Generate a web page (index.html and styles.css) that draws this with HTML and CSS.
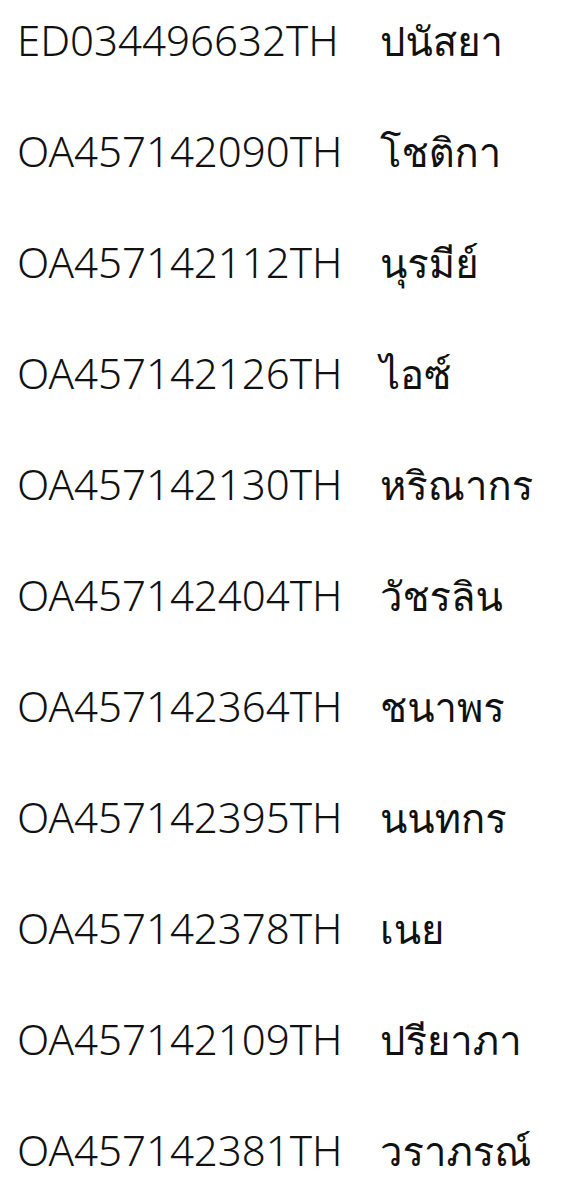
FILE: index.html
```html
<!DOCTYPE html>
<html lang="th">
<head>
  <meta charset="UTF-8" />
  <meta name="viewport" content="width=device-width, initial-scale=1.0" />
  <title>รายการพัสดุ</title>
  <link rel="stylesheet" href="styles.css">
</head>
<body>
  <ul class="list">
    <li class="row"><span class="code">ED034496632TH</span><span class="name">ปนัสยา</span></li>
    <li class="row"><span class="code">OA457142090TH</span><span class="name">โชติกา</span></li>
    <li class="row"><span class="code">OA457142112TH</span><span class="name">นุรมีย์</span></li>
    <li class="row"><span class="code">OA457142126TH</span><span class="name">ไอซ์</span></li>
    <li class="row"><span class="code">OA457142130TH</span><span class="name">หริณากร</span></li>
    <li class="row"><span class="code">OA457142404TH</span><span class="name">วัชรลิน</span></li>
    <li class="row"><span class="code">OA457142364TH</span><span class="name">ชนาพร</span></li>
    <li class="row"><span class="code">OA457142395TH</span><span class="name">นนทกร</span></li>
    <li class="row"><span class="code">OA457142378TH</span><span class="name">เนย</span></li>
    <li class="row"><span class="code">OA457142109TH</span><span class="name">ปรียาภา</span></li>
    <li class="row"><span class="code">OA457142381TH</span><span class="name">วราภรณ์</span></li>
  </ul>
</body>
</html>
```

FILE: styles.css
```css
body {
  margin: 0;
  background: #fff;
  color: #111;
  font-family: 'Noto Sans', 'DejaVu Sans', sans-serif;
}

.list {
  list-style: none;
  margin: 0;
  padding: 0 0 0 17px;
}

.row {
  display: flex;
  align-items: baseline;
  height: 111px;
  line-height: 80px;
  font-size: 42px;
  font-weight: 300;
}

.code {
  width: 363px;
  flex: none;
}

.name {
  font-family: 'Loma', 'Garuda', 'Sarabun', 'Noto Sans Thai Looped', 'Noto Sans Thai', 'Noto Sans', sans-serif;
  font-size: 40px;
  font-weight: 300;
}
```
